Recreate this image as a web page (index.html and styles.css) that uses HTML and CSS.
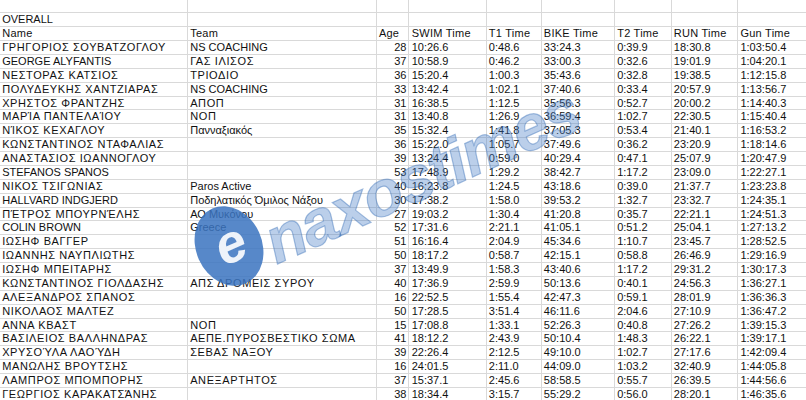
FILE: index.html
```html
<!DOCTYPE html>
<html lang="el">
<head>
<meta charset="utf-8">
<link rel="stylesheet" href="styles.css">
</head>
<body>
<div class="sheet">
  <div class="row"><div></div><div></div><div></div><div></div><div></div><div></div><div></div><div></div><div></div></div>
  <div class="row"><div>OVERALL</div><div></div><div></div><div></div><div></div><div></div><div></div><div></div><div></div></div>
  <div class="row head"><div>Name</div><div>Team</div><div>Age</div><div>SWIM Time</div><div>T1 Time</div><div>BIKE Time</div><div>T2 Time</div><div>RUN Time</div><div>Gun Time</div></div>
  <div class="row"><div class="g">ΓΡΗΓΟΡΙΟΣ ΣΟΥΒΑΤΖΟΓΛΟΥ</div><div>NS COACHING</div><div class="num">28</div><div>10:26.6</div><div>0:48.6</div><div>33:24.3</div><div>0:39.9</div><div>18:30.8</div><div>1:03:50.4</div></div>
  <div class="row"><div>GEORGE ALYFANTIS</div><div class="g">ΓΑΣ ΙΛΙΣΟΣ</div><div class="num">37</div><div>10:58.9</div><div>0:46.2</div><div>33:00.3</div><div>0:32.6</div><div>19:01.9</div><div>1:04:20.1</div></div>
  <div class="row"><div class="g">ΝΕΣΤΟΡΑΣ ΚΑΤΣΙΟΣ</div><div class="g">ΤΡΙΟΔΙΟ</div><div class="num">36</div><div>15:20.4</div><div>1:00.3</div><div>35:43.6</div><div>0:32.8</div><div>19:38.5</div><div>1:12:15.8</div></div>
  <div class="row"><div class="g">ΠΟΛΥΔΕΥΚΗΣ ΧΑΝΤΖΙΑΡΑΣ</div><div>NS COACHING</div><div class="num">33</div><div>13:42.4</div><div>1:02.1</div><div>37:40.6</div><div>0:33.4</div><div>20:57.9</div><div>1:13:56.7</div></div>
  <div class="row"><div class="g">ΧΡΗΣΤΟΣ ΦΡΑΝΤΖΗΣ</div><div class="g">ΑΠΟΠ</div><div class="num">31</div><div>16:38.5</div><div>1:12.5</div><div>35:56.3</div><div>0:52.7</div><div>20:00.2</div><div>1:14:40.3</div></div>
  <div class="row"><div class="g">ΜΑΡΊΑ ΠΑΝΤΕΛΑΊΟΥ</div><div class="g">ΝΟΠ</div><div class="num">31</div><div>13:40.8</div><div>1:26.9</div><div>36:59.4</div><div>1:02.7</div><div>22:30.5</div><div>1:15:40.4</div></div>
  <div class="row"><div class="g">ΝΊΚΟΣ ΚΕΧΑΓΛΟΥ</div><div>Πανναξιακός</div><div class="num">35</div><div>15:32.4</div><div>1:41.8</div><div>37:05.3</div><div>0:53.4</div><div>21:40.1</div><div>1:16:53.2</div></div>
  <div class="row"><div class="g">ΚΩΝΣΤΑΝΤΙΝΟΣ ΝΤΑΦΑΛΙΑΣ</div><div></div><div class="num">36</div><div>15:22.0</div><div>1:05.7</div><div>37:49.6</div><div>0:36.2</div><div>23:20.9</div><div>1:18:14.6</div></div>
  <div class="row"><div class="g">ΑΝΑΣΤΑΣΙΟΣ ΙΩΑΝΝΟΓΛΟΥ</div><div></div><div class="num">39</div><div>13:24.4</div><div>0:59.0</div><div>40:29.4</div><div>0:47.1</div><div>25:07.9</div><div>1:20:47.9</div></div>
  <div class="row"><div>STEFANOS SPANOS</div><div></div><div class="num">53</div><div>17:48.9</div><div>1:29.2</div><div>38:42.7</div><div>1:17.2</div><div>23:09.0</div><div>1:22:27.1</div></div>
  <div class="row"><div class="g">ΝΙΚΟΣ ΤΣΙΓΩΝΙΑΣ</div><div>Paros Active</div><div class="num">40</div><div>16:23.8</div><div>1:24.5</div><div>43:18.6</div><div>0:39.0</div><div>21:37.7</div><div>1:23:23.8</div></div>
  <div class="row"><div>HALLVARD INDGJERD</div><div>Ποδηλατικός Όμιλος Νάξου</div><div class="num">30</div><div>17:38.2</div><div>1:58.0</div><div>39:53.2</div><div>1:32.7</div><div>23:32.7</div><div>1:24:35.1</div></div>
  <div class="row"><div class="g">ΠΈΤΡΟΣ ΜΠΟΥΡΝΈΛΗΣ</div><div>ΑΟ Μυκόνου</div><div class="num">27</div><div>19:03.2</div><div>1:30.4</div><div>41:20.8</div><div>0:35.7</div><div>22:21.1</div><div>1:24:51.3</div></div>
  <div class="row"><div>COLIN BROWN</div><div>Greece</div><div class="num">52</div><div>17:31.6</div><div>2:21.1</div><div>41:05.1</div><div>0:51.2</div><div>25:04.1</div><div>1:27:13.2</div></div>
  <div class="row"><div class="g">ΙΩΣΗΦ ΒΑΓΓΕΡ</div><div></div><div class="num">51</div><div>16:16.4</div><div>2:04.9</div><div>45:34.6</div><div>1:10.7</div><div>23:45.7</div><div>1:28:52.5</div></div>
  <div class="row"><div class="g">ΙΩΑΝΝΗΣ ΝΑΥΠΛΙΩΤΗΣ</div><div></div><div class="num">50</div><div>18:17.2</div><div>0:58.7</div><div>42:15.1</div><div>0:58.8</div><div>26:46.9</div><div>1:29:16.9</div></div>
  <div class="row"><div class="g">ΙΩΣΗΦ ΜΠΕΙΤΑΡΗΣ</div><div></div><div class="num">37</div><div>13:49.9</div><div>1:58.3</div><div>43:40.6</div><div>1:17.2</div><div>29:31.2</div><div>1:30:17.3</div></div>
  <div class="row"><div class="g">ΚΩΝΣΤΑΝΤΙΝΟΣ ΓΙΟΛΔΑΣΗΣ</div><div class="g">ΑΠΣ ΔΡΟΜΕΙΣ ΣΥΡΟΥ</div><div class="num">40</div><div>17:36.9</div><div>2:59.9</div><div>50:13.6</div><div>0:40.1</div><div>24:56.3</div><div>1:36:27.1</div></div>
  <div class="row"><div class="g">ΑΛΕΞΑΝΔΡΟΣ ΣΠΑΝΟΣ</div><div></div><div class="num">16</div><div>22:52.5</div><div>1:55.4</div><div>42:47.3</div><div>0:59.1</div><div>28:01.9</div><div>1:36:36.3</div></div>
  <div class="row"><div class="g">ΝΙΚΟΛΑΟΣ ΜΑΛΤΕΖ</div><div></div><div class="num">50</div><div>17:28.5</div><div>3:51.4</div><div>46:11.6</div><div>2:04.6</div><div>27:10.9</div><div>1:36:47.2</div></div>
  <div class="row"><div class="g">ΑΝΝΑ ΚΒΑΣΤ</div><div class="g">ΝΟΠ</div><div class="num">15</div><div>17:08.8</div><div>1:33.1</div><div>52:26.3</div><div>0:40.8</div><div>27:26.2</div><div>1:39:15.3</div></div>
  <div class="row"><div class="g">ΒΑΣΙΛΕΙΟΣ ΒΑΛΛΗΝΔΡΑΣ</div><div class="g">ΑΕΠΕ.ΠΥΡΟΣΒΕΣΤΙΚΟ ΣΩΜΑ</div><div class="num">41</div><div>18:12.2</div><div>2:43.9</div><div>50:10.4</div><div>1:48.3</div><div>26:22.1</div><div>1:39:17.1</div></div>
  <div class="row"><div class="g">ΧΡΥΣΟΎΛΑ ΛΑΟΎΔΗ</div><div class="g">ΣΕΒΑΣ ΝΑΞΟΥ</div><div class="num">39</div><div>22:26.4</div><div>2:12.5</div><div>49:10.0</div><div>1:02.7</div><div>27:17.6</div><div>1:42:09.4</div></div>
  <div class="row"><div class="g">ΜΑΝΩΛΗΣ ΒΡΟΥΤΣΗΣ</div><div></div><div class="num">16</div><div>24:01.5</div><div>2:11.0</div><div>44:09.0</div><div>1:03.2</div><div>32:40.9</div><div>1:44:05.8</div></div>
  <div class="row"><div class="g">ΛΑΜΠΡΟΣ ΜΠΟΜΠΟΡΗΣ</div><div class="g">ΑΝΕΞΑΡΤΗΤΟΣ</div><div class="num">37</div><div>15:37.1</div><div>2:45.6</div><div>58:58.5</div><div>0:55.7</div><div>26:39.5</div><div>1:44:56.6</div></div>
  <div class="row"><div class="g">ΓΕΩΡΓΙΟΣ ΚΑΡΑΚΑΤΣΆΝΗΣ</div><div></div><div class="num">38</div><div>18:34.4</div><div>3:15.7</div><div>55:29.2</div><div>0:56.0</div><div>28:20.1</div><div>1:46:35.6</div></div>

  <svg class="watermark" width="806" height="400" viewBox="0 0 806 400" aria-hidden="true">
    <g transform="translate(229 247) rotate(-24)">
      <ellipse cx="0" cy="0" rx="33" ry="41" class="wm-disc"/>
      <text x="2" y="17" text-anchor="middle" class="wm-e">e</text>
    </g>
    <g transform="translate(232 259) rotate(-24)">
      <text x="38" y="24" class="wm-text">naxostimes</text>
    </g>
  </svg>
</div>
</body>
</html>
```

FILE: styles.css
```css
html, body {
  margin: 0;
  padding: 0;
  background: #ffffff;
}

body {
  width: 806px;
  height: 400px;
  overflow: hidden;
  font-family: "Liberation Sans", Arial, Helvetica, sans-serif;
  font-size: 11px;
  color: #111111;
}

.sheet {
  position: relative;
  margin-top: -0.55px;
}

.row {
  display: grid;
  grid-template-columns: 188px 188.7px 32.8px 77.2px 55px 73.3px 56.7px 66.6px 80px;
  height: 13.88px;
}

.row > div {
  box-sizing: border-box;
  border-right: 1px solid #d9d9d9;
  border-bottom: 1px solid #d9d9d9;
  padding: 0 0 0 2.2px;
  line-height: 13px;
  white-space: nowrap;
  overflow: hidden;
}

.row.head > div {
  letter-spacing: 0.25px;
}

.row > .g {
  letter-spacing: 0.6px;
}

.row > .num {
  text-align: right;
  padding: 0 2px 0 0;
}

.watermark {
  position: absolute;
  left: 0;
  top: 0;
  pointer-events: none;
}

.wm-disc {
  fill: #3a73bf;
  fill-opacity: 0.85;
}

.wm-e {
  font-family: "Liberation Sans", Arial, sans-serif;
  font-weight: bold;
  font-style: italic;
  font-size: 54px;
  fill: #ffffff;
  fill-opacity: 0.9;
}

.wm-text {
  font-family: "Liberation Sans", Arial, sans-serif;
  font-weight: bold;
  font-style: italic;
  font-size: 64px;
  fill: #4b82c8;
  fill-opacity: 0.38;
  stroke: #2f68b5;
  stroke-opacity: 0.4;
  stroke-width: 1.2;
  letter-spacing: -1.5px;
}
```
